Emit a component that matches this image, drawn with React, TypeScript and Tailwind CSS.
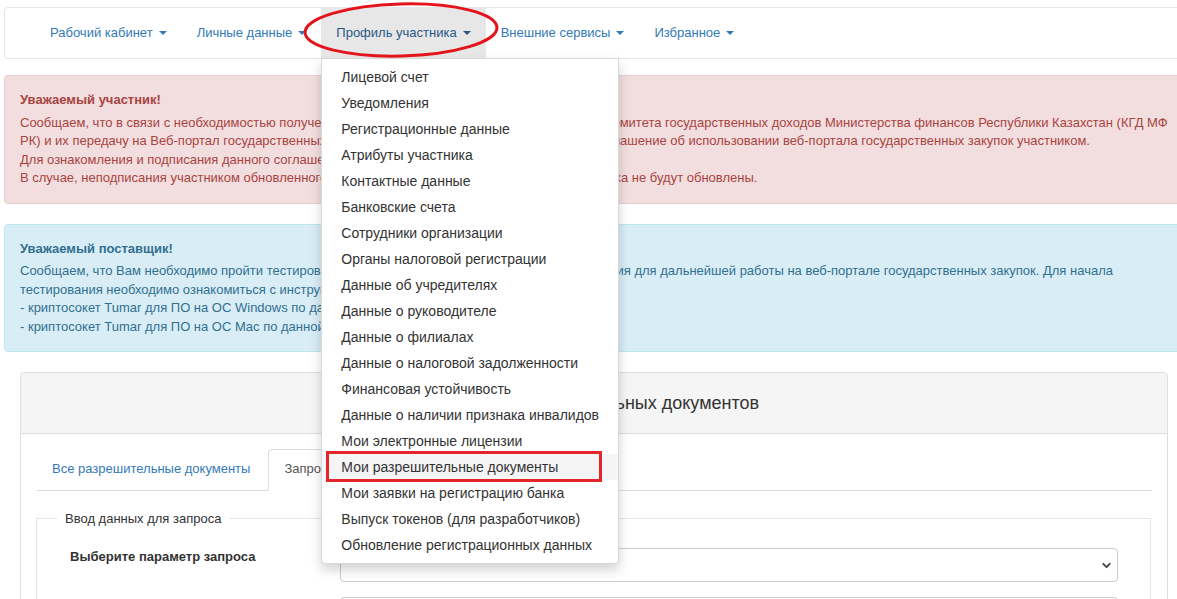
import React from 'react';
import { ChevronDown } from 'lucide-react';

const NAV_ITEMS = ['Рабочий кабинет', 'Личные данные', 'Профиль участника', 'Внешние сервисы', 'Избранное'];

const PROFILE_MENU = [
  'Лицевой счет',
  'Уведомления',
  'Регистрационные данные',
  'Атрибуты участника',
  'Контактные данные',
  'Банковские счета',
  'Сотрудники организации',
  'Органы налоговой регистрации',
  'Данные об учредителях',
  'Данные о руководителе',
  'Данные о филиалах',
  'Данные о налоговой задолженности',
  'Финансовая устойчивость',
  'Данные о наличии признака инвалидов',
  'Мои электронные лицензии',
  'Мои разрешительные документы',
  'Мои заявки на регистрацию банка',
  'Выпуск токенов (для разработчиков)',
  'Обновление регистрационных данных',
];

function Caret() {
  return <span className="inline-block w-0 h-0 ml-[6px] align-middle border-t-[4px] border-t-current border-x-[4px] border-x-transparent" />;
}

function ProfileDropdown() {
  return (
    <ul className="absolute top-full left-0 z-10 w-[298px] py-[5px] bg-white border border-black/15 rounded-b-[4px] shadow-[0_6px_12px_rgba(0,0,0,0.175)]">
      {PROFILE_MENU.map((item) => (
        <li
          key={item}
          className={`pl-[19px] pr-[20px] py-[3px] text-[14px] leading-[20px] text-[#333] whitespace-nowrap ${
            item === 'Мои разрешительные документы' ? 'bg-[#f5f5f5]' : ''
          }`}
        >
          {item}
        </li>
      ))}
    </ul>
  );
}

function Navbar() {
  return (
    <nav className="flex h-[52px] mr-[-40px] pl-[30px] bg-white border border-[#e7e7e7] rounded-[4px]">
      {NAV_ITEMS.map((item) => {
        const active = item === 'Профиль участника';
        return (
          <div
            key={item}
            className={`relative flex items-center px-[15px] text-[13px] ${
              active ? 'bg-[#e7e7e7] text-[#2a5885]' : 'text-[#337ab7]'
            }`}
          >
            {item}
            <Caret />
            {active && <ProfileDropdown />}
          </div>
        );
      })}
    </nav>
  );
}

function Alert({ tone, title, lines }: { tone: 'danger' | 'info'; title: string; lines: string[] }) {
  const cls =
    tone === 'danger'
      ? 'bg-[#f2dede] border-[#ebccd1] text-[#a94442]'
      : 'bg-[#d9edf7] border-[#bce8f1] text-[#31708f]';
  return (
    <div className={`mr-[-40px] p-[15px] border rounded-[4px] text-[13px] leading-[18.5px] ${cls}`}>
      <div className="font-bold mb-[4px]">{title}</div>
      {lines.map((line, i) => (
        <div key={i} className="whitespace-nowrap">
          {line}
        </div>
      ))}
    </div>
  );
}

function RequestPanel() {
  return (
    <div className="ml-[16px] w-[1148px] border border-[#ddd] rounded-[4px] bg-white">
      <div className="h-[61px] flex items-center justify-center bg-[#f5f5f5] border-b border-[#ddd] rounded-t-[4px] text-[18px] text-[#333]">
        Перечень разрешительных документов
      </div>
      <div className="px-[15px] pt-[15px]">
        <div className="flex border-b border-[#ddd] text-[13px] leading-[18.5px]">
          <div className="px-[15px] py-[10px] mr-[2px] border border-transparent text-[#337ab7]">
            Все разрешительные документы
          </div>
          <div className="px-[15px] py-[10px] mb-[-1px] border border-[#ddd] border-b-white rounded-t-[4px] bg-white text-[#555]">
            Запрос разрешительных документов
          </div>
        </div>
        <fieldset className="mt-[18px] mr-[1px] px-[20px] pb-[40px] border border-[#e5e5e5]">
          <legend className="px-[8px] text-[13px] text-[#333]">Ввод данных для запроса</legend>
          <div className="flex items-start mt-[20px]">
            <label className="w-[283px] pl-[13px] text-[13px] font-bold text-[#333] leading-[18.5px]">
              Выберите параметр запроса
            </label>
            <div className="flex-1 mr-[12px] h-[34px] flex items-center justify-end pr-[4px] border border-[#ccc] rounded-[4px]">
              <ChevronDown size={13} strokeWidth={3.5} className="text-[#444]" />
            </div>
          </div>
          <div className="flex mt-[15px]">
            <div className="w-[283px]" />
            <div className="flex-1 mr-[12px] h-[34px] border border-[#ccc] rounded-[4px]" />
          </div>
        </fieldset>
      </div>
    </div>
  );
}

export default function App() {
  return (
    <div
      className="relative h-[599px] overflow-hidden bg-white text-[#333]"
      style={{ fontFamily: '"Liberation Sans", Arial, sans-serif' }}
    >
      <div className="pl-[4px] pt-[7px]">
        <div className="relative z-20">
          <Navbar />
        </div>
        <div className="mt-[16px]">
          <Alert
            tone="danger"
            title="Уважаемый участник!"
            lines={[
              'Сообщаем, что в связи с необходимостью получения сведений из баз информационных систем Комитета государственных доходов Министерства финансов Республики Казахстан (КГД МФ',
              'РК) и их передачу на Веб-портал государственных закупок, необходимо принять обновленное соглашение об использовании веб-портала государственных закупок участником.',
              'Для ознакомления и подписания данного соглашения перейдите в раздел «Профиль участника».',
              'В случае, неподписания участником обновленного соглашения, сведения из КГД МФ РК у участника не будут обновлены.',
            ]}
          />
        </div>
        <div className="mt-[20px]">
          <Alert
            tone="info"
            title="Уважаемый поставщик!"
            lines={[
              'Сообщаем, что Вам необходимо пройти тестирование нового криптосокета Tumar, и его применения для дальнейшей работы на веб-портале государственных закупок. Для начала',
              'тестирования необходимо ознакомиться с инструкцией:',
              '- криптосокет Tumar для ПО на ОС Windows по данной ссылке',
              '- криптосокет Tumar для ПО на ОС Mac по данной ссылке',
            ]}
          />
        </div>
        <div className="mt-[20px]">
          <RequestPanel />
        </div>
      </div>

      <svg className="absolute inset-0 z-30 pointer-events-none" width="1177" height="599" viewBox="0 0 1177 599">
        <ellipse cx="401" cy="30" rx="96" ry="26" fill="none" stroke="#e3151b" strokeWidth="3" transform="rotate(-1.5 401 30)" />
        <rect x="327.5" y="452.5" width="273" height="28" fill="none" stroke="#e3262a" strokeWidth="3" />
      </svg>
    </div>
  );
}
